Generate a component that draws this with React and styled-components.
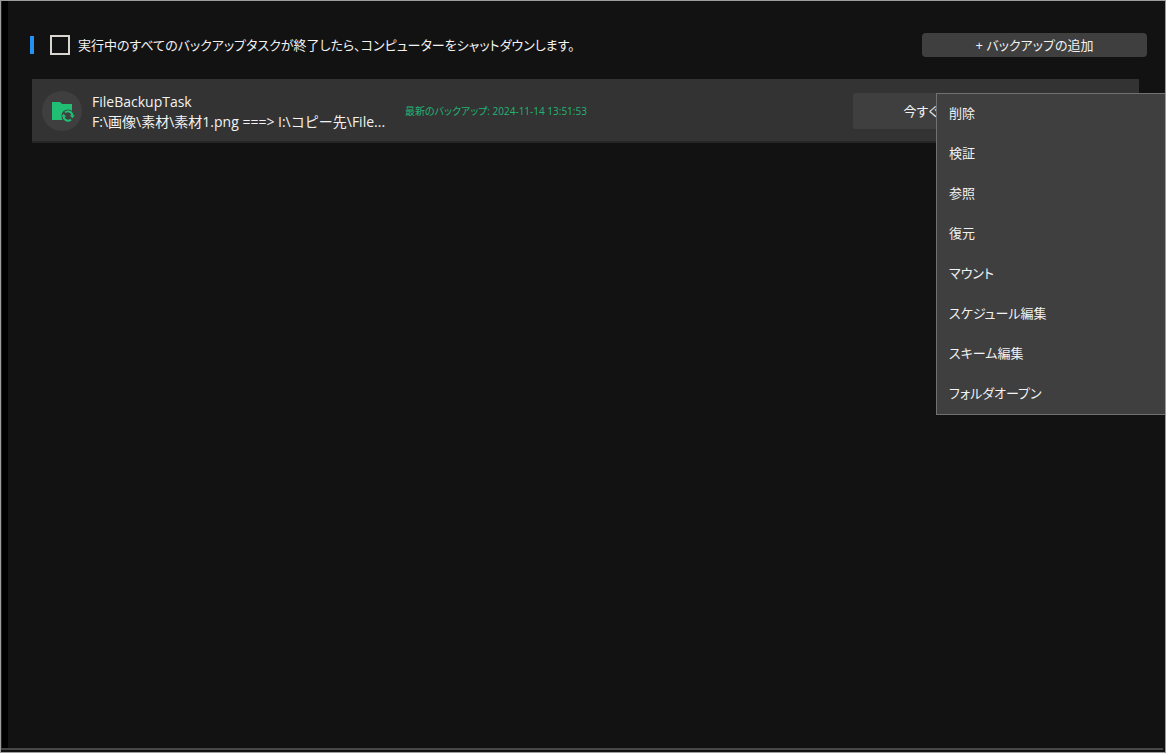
import React, { useState } from 'react'
import styled, { createGlobalStyle } from 'styled-components'

const GlobalStyle = createGlobalStyle`
  * {
    box-sizing: border-box;
  }

  body {
    margin: 0;
    background-color: #121212;
    color: #f2f2f2;
    font-family: "Open Sans", "Noto Sans CJK JP", sans-serif;
    font-size: 13px;
    line-height: 20px;
    font-feature-settings: "palt";
  }

  button, input {
    font: inherit;
    font-feature-settings: inherit;
    color: inherit;
  }
`

const Window = styled.div`
  min-height: 100vh;
  display: flex;
  border: 1px solid #9c9e9c;
  overflow: hidden;
`

const SideEdge = styled.div`
  width: 7px;
  border-left: 1px solid #242424;
  background-color: black;
`

const Main = styled.main`
  flex: 1;
  min-width: 0;
  padding: 32px 18px 0 22px;
`

const Body = styled.div`
  flex: 1;
  min-width: 0;
  display: flex;
  flex-direction: column;
`

const Columns = styled.div`
  flex: 1;
  display: flex;
`

const BottomEdge = styled.div`
  height: 4px;
  margin-right: 2px;
  border-top: 2px solid #474747;
`

const Toolbar = styled.div`
  display: flex;
  align-items: center;
  justify-content: space-between;
`

const ShutdownOption = styled.label`
  display: flex;
  align-items: center;
  gap: 8px;
  white-space: nowrap;
`

const Marker = styled.span`
  width: 4px;
  height: 18px;
  margin-right: 8px;
  background-color: #2492ee;
`

const Checkbox = styled.input`
  appearance: none;
  width: 20px;
  height: 20px;
  margin: 0;
  border: 2px solid #d9d6d1;

  &:checked {
    background-color: #2492ee;
  }
`

const AddButton = styled.button`
  width: 225px;
  height: 24px;
  padding: 0;
  border: none;
  border-radius: 4px;
  background-color: #3f3f3f;
  cursor: pointer;
`

const TaskList = styled.ul`
  list-style: none;
  margin: 22px 8px 0 2px;
  padding: 0;
`

const TaskRow = styled.li`
  position: relative;
  display: flex;
  align-items: center;
  height: 64px;
  padding: 2px 10px 0;
  border-bottom: 2px solid #262626;
  background-color: #333333;
`

const TaskIcon = styled.div`
  display: flex;
  flex-shrink: 0;
  width: 40px;
  height: 40px;
  margin-right: 10px;
  border-radius: 50%;
  background-color: #3f3f3f;
`

const TaskText = styled.div`
  width: 305px;
  padding-top: 2px;
  font-size: 14px;
  font-feature-settings: normal;
  white-space: nowrap;
`

const LastBackup = styled.div`
  flex: 1;
  margin-left: 8px;
  color: #21b573;
  font-size: 10px;
  white-space: nowrap;
`

const Actions = styled.div`
  display: flex;
  gap: 12px;
`

const ActionButton = styled.button`
  width: ${(props) => (props.$compact ? '60px' : '204px')};
  height: 36px;
  padding: 0;
  border: none;
  border-radius: 2px;
  background-color: #3f3f3f;
  cursor: pointer;
`

const Menu = styled.div`
  position: absolute;
  top: 14px;
  right: -26px;
  width: 229px;
  display: flex;
  flex-direction: column;
  border: 1px solid #717171;
  border-right: none;
  background-color: #3f3f3f;
`

const MenuItem = styled.button`
  height: 40px;
  padding: 0 12px 2px;
  border: none;
  background-color: transparent;
  text-align: left;
  cursor: pointer;

  &:hover {
    background-color: #505050;
  }
`

const menuItems = [
  '削除',
  '検証',
  '参照',
  '復元',
  'マウント',
  'スケジュール編集',
  'スキーム編集',
  'フォルダオープン',
]

function FolderSync() {
  return (
    <svg width="40" height="40" viewBox="0 0 40 40" aria-hidden="true">
      <path d="M10 11h8l2 2h10v16H10z" fill="#20bf73" />
      <circle cx="26" cy="25" r="6.6" fill="#3f3f3f" />
      <g fill="none" stroke="#20bf73" strokeWidth="2">
        <path d="M23 21.6a4.4 4.4 0 0 1 7.4 3.2" />
        <path d="M29 28.4a4.4 4.4 0 0 1-7.4-3.2" />
      </g>
      <path d="M27.8 24.2h5l-2.5 3zM19.2 25.8h5l-2.5-3z" fill="#20bf73" />
    </svg>
  )
}

function App() {
  const [shutdown, setShutdown] = useState(false)
  const [menuOpen, setMenuOpen] = useState(true)

  return (
    <>
      <GlobalStyle />
      <Window>
        <Body>
          <Columns>
            <SideEdge />
            <Main>
              <Toolbar>
                <ShutdownOption>
                  <Marker />
                  <Checkbox
                    type="checkbox"
                    checked={shutdown}
                    onChange={(e) => setShutdown(e.target.checked)}
                  />
                  実行中のすべてのバックアップタスクが終了したら、コンピューターをシャットダウンします。
                </ShutdownOption>
                <AddButton>+ バックアップの追加</AddButton>
              </Toolbar>
              <TaskList>
                <TaskRow>
                  <TaskIcon>
                    <FolderSync />
                  </TaskIcon>
                  <TaskText>
                    <div>FileBackupTask</div>
                    <div>F:\画像\素材\素材1.png ===&gt; I:\コピー先\File...</div>
                  </TaskText>
                  <LastBackup>最新のバックアップ: 2024-11-14 13:51:53</LastBackup>
                  <Actions>
                    <ActionButton>今すぐバックアップ</ActionButton>
                    <ActionButton
                      $compact
                      aria-label="メニュー"
                      aria-haspopup="menu"
                      aria-expanded={menuOpen}
                      onClick={() => setMenuOpen(!menuOpen)}
                    />
                  </Actions>
                  {menuOpen && (
                    <Menu role="menu">
                      {menuItems.map((item) => (
                        <MenuItem key={item} role="menuitem">{item}</MenuItem>
                      ))}
                    </Menu>
                  )}
                </TaskRow>
              </TaskList>
            </Main>
          </Columns>
          <BottomEdge />
        </Body>
      </Window>
    </>
  )
}

export default App
